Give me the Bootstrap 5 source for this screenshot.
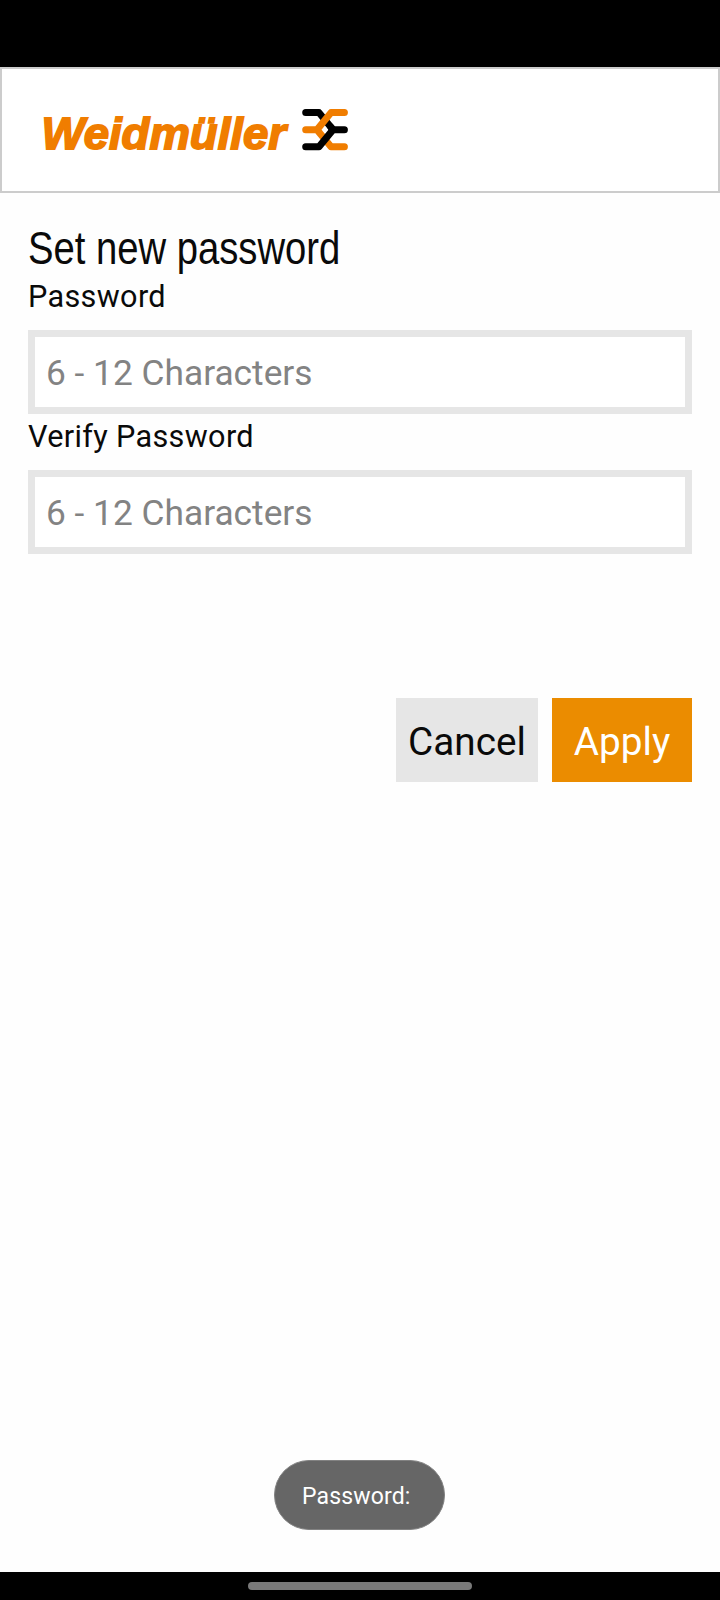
<!DOCTYPE html>
<html lang="en">
<head>
<meta charset="utf-8">
<meta name="viewport" content="width=device-width, initial-scale=1">
<title>Set new password</title>
<link href="https://cdn.jsdelivr.net/npm/bootstrap@5.3.0/dist/css/bootstrap.min.css" rel="stylesheet">
<style>
body { font-family: Roboto, sans-serif; color: #0a0a0a; }
.screen { height: 1600px; background: #fefefe; }
.status-bar { height: 67px; background: #000; }
.brand-bar { height: 126px; border: 2px solid #ccc; background: #fff; }
.brand-logo { display: block; width: 320px; height: 60px; margin-left: 38px; }
.brand-logo text { font-family: "Liberation Sans", sans-serif; font-weight: 700; font-style: italic; font-size: 45px; }
.content { padding: 27px 28px 0; }
.page-title { font-family: "Liberation Sans", sans-serif; font-size: 46.5px; line-height: 56px; height: 56px; font-weight: 400; white-space: nowrap; }
.page-title span { display: inline-block; transform: scaleX(.822); transform-origin: left; }
.form-label { font-size: 30.6px; line-height: 40px; height: 54px; padding-top: 1px; letter-spacing: .35px; }
.form-label.verify { height: 56px; padding-top: 3px; }
.form-control { height: 84px; border: 7px solid #e6e6e6; padding: 2px 11px 0; font-size: 35.3px; background: #fff; }
.form-control::placeholder { color: #838383; opacity: 1; }
.actions { margin-top: 144px; gap: 14px; }
.actions .btn { height: 84px; font-size: 38.7px; line-height: 1; padding: 5px 0 0; border: 0; }
.btn-cancel { width: 142px; background: #e6e6e6; color: #0a0a0a; }
.btn-apply { width: 140px; background: #eb8c00; color: #fff; }
.toast-pill { width: 171px; height: 70px; margin: 0 1px 42px 0; background: #666; color: #fff; border: 1px solid #828282; font-size: 23px; letter-spacing: .15px; padding: 5px 0 0 27px; }
.gesture-bar { height: 28px; background: #000; }
.gesture-bar span { width: 224px; height: 8px; background: #797979; }
</style>
</head>
<body>
<div class="screen d-flex flex-column overflow-hidden">
  <div class="status-bar flex-shrink-0"></div>
  <header class="brand-bar d-flex align-items-center flex-shrink-0">
    <svg class="brand-logo" viewBox="40 100 320 60" role="img" aria-label="Weidmüller">
      <text x="41.5" y="149" textLength="244.5" lengthAdjust="spacingAndGlyphs" fill="#f07d00" stroke="#f07d00" stroke-width="1.8">Weidmüller</text>
      <g fill="none" stroke-width="7" stroke-linecap="round" stroke-linejoin="round">
        <path stroke="#000" d="M305.7 112.6H319L333 129.7"/>
        <path stroke="#f07d00" d="M344.4 112.6H331L317 129.7H305.7M317 129.7L331 146.7H344.4"/>
        <path stroke="#000" d="M305.7 146.7H319L333 129.7H344.4M331 127.3L333 129.7"/>
      </g>
    </svg>
  </header>
  <main class="content flex-grow-1">
    <h1 class="page-title m-0"><span>Set new password</span></h1>
    <form>
      <label class="form-label d-block mb-0" for="password">Password</label>
      <input class="form-control rounded-0" id="password" type="password" placeholder="6 - 12 Characters">
      <label class="form-label verify d-block mb-0" for="verify">Verify Password</label>
      <input class="form-control rounded-0" id="verify" type="password" placeholder="6 - 12 Characters">
      <div class="actions d-flex justify-content-end">
        <button class="btn btn-cancel rounded-0" type="button">Cancel</button>
        <button class="btn btn-apply rounded-0" type="button">Apply</button>
      </div>
    </form>
  </main>
  <div class="toast-pill rounded-pill d-flex align-items-center align-self-center flex-shrink-0">Password:</div>
  <div class="gesture-bar d-flex justify-content-center align-items-center flex-shrink-0"><span class="rounded-pill"></span></div>
</div>
<script src="https://cdn.jsdelivr.net/npm/bootstrap@5.3.0/dist/js/bootstrap.bundle.min.js"></script>
</body>
</html>
